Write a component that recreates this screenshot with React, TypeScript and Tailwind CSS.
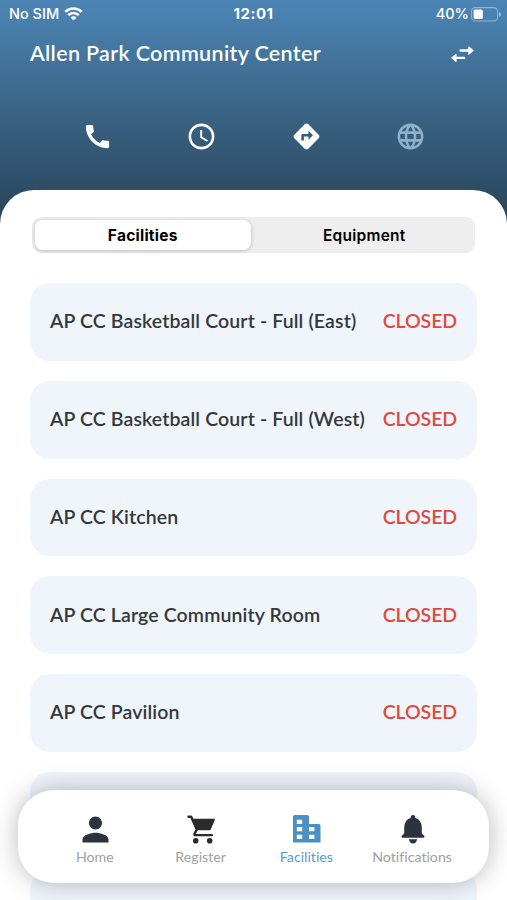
import React from "react";
import { MdCall, MdAccessTime, MdDirections, MdLanguage, MdPerson } from "react-icons/md";
import { clsx } from "clsx";

// ─── Types ───────────────────────────────────────────────────────────────────

interface Facility {
  name: string;
  status: string;
}

interface TabItem {
  label: string;
  icon: React.ReactNode;
  isActive?: boolean;
}

// ─── Data ────────────────────────────────────────────────────────────────────

const FACILITIES: Facility[] = [
  { name: "AP CC Basketball Court - Full (East)", status: "CLOSED" },
  { name: "AP CC Basketball Court - Full (West)", status: "CLOSED" },
  { name: "AP CC Kitchen", status: "CLOSED" },
  { name: "AP CC Large Community Room", status: "CLOSED" },
  { name: "AP CC Pavilion", status: "CLOSED" },
];

const TABS: TabItem[] = [
  { label: "Home", icon: <MdPerson size={39} className="text-[#2d333e]" /> },
  { label: "Register", icon: <CartIcon /> },
  { label: "Facilities", icon: <BuildingIcon />, isActive: true },
  { label: "Notifications", icon: <BellIcon /> },
];

// ─── Icons ───────────────────────────────────────────────────────────────────

function WifiIcon() {
  return (
    <svg width="19" height="14" viewBox="0 0 18 14" fill="none" stroke="white" strokeWidth="2.5">
      <path d="M0.8 4.9a11.6 11.6 0 0 1 16.4 0" />
      <path d="M3.7 8.200a7.500 7.500 0 0 1 10.600 0" />
      <path d="M9 13.6L5.9 10.6a4.4 4.4 0 0 1 6.2 0z" fill="white" stroke="none" />
    </svg>
  );
}

function BatteryIcon() {
  return (
    <svg width="30" height="15" viewBox="0 0 30 15">
      <rect x="0.6" y="0.6" width="26" height="13.4" rx="3.6" fill="none" stroke="white" strokeOpacity="0.4" strokeWidth="1.1" />
      <rect x="2.6" y="2.6" width="9.2" height="9.4" rx="1.6" fill="white" />
      <path d="M28 5v4.8q2-.8 2-2.4t-2-2.4z" fill="white" fillOpacity="0.5" />
    </svg>
  );
}

function SwitchIcon() {
  return (
    <svg width="23" height="17" viewBox="0 0 23 17" fill="white" stroke="white" strokeLinejoin="round" strokeLinecap="round">
      <path d="M9.600 4.500h8M13.200 11.900h-8" strokeWidth="2.400" fill="none" />
      <path d="M17.800 1l4.200 3.500-4.200 3.500zM5 8.400l-4.200 3.500 4.200 3.500z" strokeWidth="1.200" />
    </svg>
  );
}

function CartIcon() {
  return (
    <svg width="29" height="29" viewBox="0 0 29 29" fill="none" stroke="#2b2b2d" strokeLinecap="round" strokeLinejoin="round">
      <path d="M1.500 1.700h2.700l5.600 12.800-2.200 4.100q-.7 1.500 1 1.500h16.300" strokeWidth="2.400" />
      <path d="M5.200 4.400h22l-4.200 10.200H9.800z" fill="#2b2b2d" strokeWidth="1.400" />
      <circle cx="8.700" cy="25.700" r="2.800" fill="#2b2b2d" stroke="none" />
      <circle cx="22.700" cy="25.700" r="2.800" fill="#2b2b2d" stroke="none" />
    </svg>
  );
}

function BuildingIcon() {
  return (
    <svg width="28" height="28" viewBox="0 0 28 28">
      <path
        fill="#4a90c5"
        fillRule="evenodd"
        d="M1.600 0h12.800q1.600 0 1.600 1.600V9h9.900q1.600 0 1.600 1.600V27.500H0V1.600Q0 0 1.600 0zM3.800 4.700v4.300h5.400V4.700zM3.800 12v4.300h5.400v-4.300zM3.800 19.700v4.300h5.400v-4.300zM16 12v4.300h5.400v-4.300zM16 19.700v4.300h5.400v-4.300z"
      />
    </svg>
  );
}

function BellIcon() {
  return (
    <svg width="24" height="29" viewBox="0 0 24 29" fill="#2d333e">
      <path d="M12 0q2.300 0 2.400 2.900Q20.800 4.900 20.800 12.500v5.300q0 1.300 1.500 2.200 1.200.7 1.200 1.700 0 1-1.100 1H1.600q-1.100 0-1.100-1 0-1 1.200-1.700 1.500-.9 1.500-2.200v-5.300Q3.200 4.900 9.600 2.900 9.700 0 12 0z" />
      <path d="M7.900 24.300h8.200q-.8 4.200-4.100 4.200t-4.100-4.200z" />
    </svg>
  );
}

// ─── Sections ────────────────────────────────────────────────────────────────

function StatusBar() {
  return (
    <div className="grid h-7 grid-cols-3 items-center pl-[9px] pr-[6px] font-['Inter',sans-serif] text-[14.500px] font-medium">
      <div className="flex items-center gap-[5px]">
        <span>No SIM</span>
        <WifiIcon />
      </div>
      <span className="-ml-[3px] text-center text-[15px] font-bold tracking-[0.500px]">12:01</span>
      <div className="flex items-center justify-end gap-[2px]">
        <span>40%</span>
        <BatteryIcon />
      </div>
    </div>
  );
}

function SegmentedControl() {
  return (
    <div className="mx-[32px] grid h-9 grid-cols-2 rounded-[9px] bg-[#eeeeef] p-[3px] font-['Inter',sans-serif] text-[15.500px] font-bold text-black">
      <button className="mr-[3px] rounded-[8px] bg-white pt-px tracking-[0.250px] shadow-[0_1px_4px_rgba(0,0,0,0.2)]">
        Facilities
      </button>
      <button className="pl-[3px] pt-px font-semibold tracking-[0.250px]">Equipment</button>
    </div>
  );
}

function FacilityCard({ name, status }: Facility) {
  return (
    <li className="flex h-[77.800px] shrink-0 items-center justify-between rounded-[20px] bg-[#f0f5fc] px-[20px] pb-[2px] text-[19.500px] font-semibold">
      <span className="whitespace-nowrap tracking-[0.120px] text-[#34383d]">{name}</span>
      <span className="tracking-[-0.100px] text-[#e0493f]">{status}</span>
    </li>
  );
}

function TabBar() {
  return (
    <nav className="absolute inset-x-[18px] top-[790px] grid h-[93px] grid-cols-4 rounded-[36px] bg-white px-6 shadow-[0_0_26px_rgba(0,0,0,0.28)]">
      {TABS.map((tab) => (
        <div key={tab.label} className="flex flex-col items-center pt-[19px]">
          <div className="flex h-10 items-center justify-center pl-px">{tab.icon}</div>
          <span
            className={clsx(
              "-mt-px text-[14.200px] leading-[18px] [font-variant-ligatures:none]",
              tab.isActive ? "text-[#5b9bd0]" : "text-[#a0a0a0]",
            )}
          >
            {tab.label}
          </span>
        </div>
      ))}
    </nav>
  );
}

// ─── Screen ──────────────────────────────────────────────────────────────────

export default function App() {
  return (
    <div className="relative h-[900px] w-[507px] overflow-hidden bg-gradient-to-b from-[#4c86b6] to-[#294459] to-[220px] font-['Lato',sans-serif] text-white">
      <header className="h-[190px]">
        <StatusBar />
        <div className="flex h-[52px] items-center justify-between pl-[30px] pr-[33px]">
          <h1 className="-mt-px text-[21.500px] font-semibold tracking-[0.330px]">Allen Park Community Center</h1>
          <SwitchIcon />
        </div>
        <div className="mt-[41px] grid grid-cols-4 justify-items-center px-11">
          <MdCall size={31} className="ml-[2px]" />
          <MdAccessTime size={31} />
          <MdDirections size={31} className="ml-px" />
          <MdLanguage size={31} className="text-[#8fb0c9]" />
        </div>
      </header>

      <main className="h-[710px] rounded-t-[34px] bg-white pt-[27px]">
        <SegmentedControl />
        <ul className="mt-[30px] flex flex-col gap-5 px-[30px]">
          {FACILITIES.map((facility) => (
            <FacilityCard key={facility.name} {...facility} />
          ))}
          <FacilityCard name="" status="" />
          <FacilityCard name="" status="" />
        </ul>
      </main>

      <TabBar />
    </div>
  );
}
